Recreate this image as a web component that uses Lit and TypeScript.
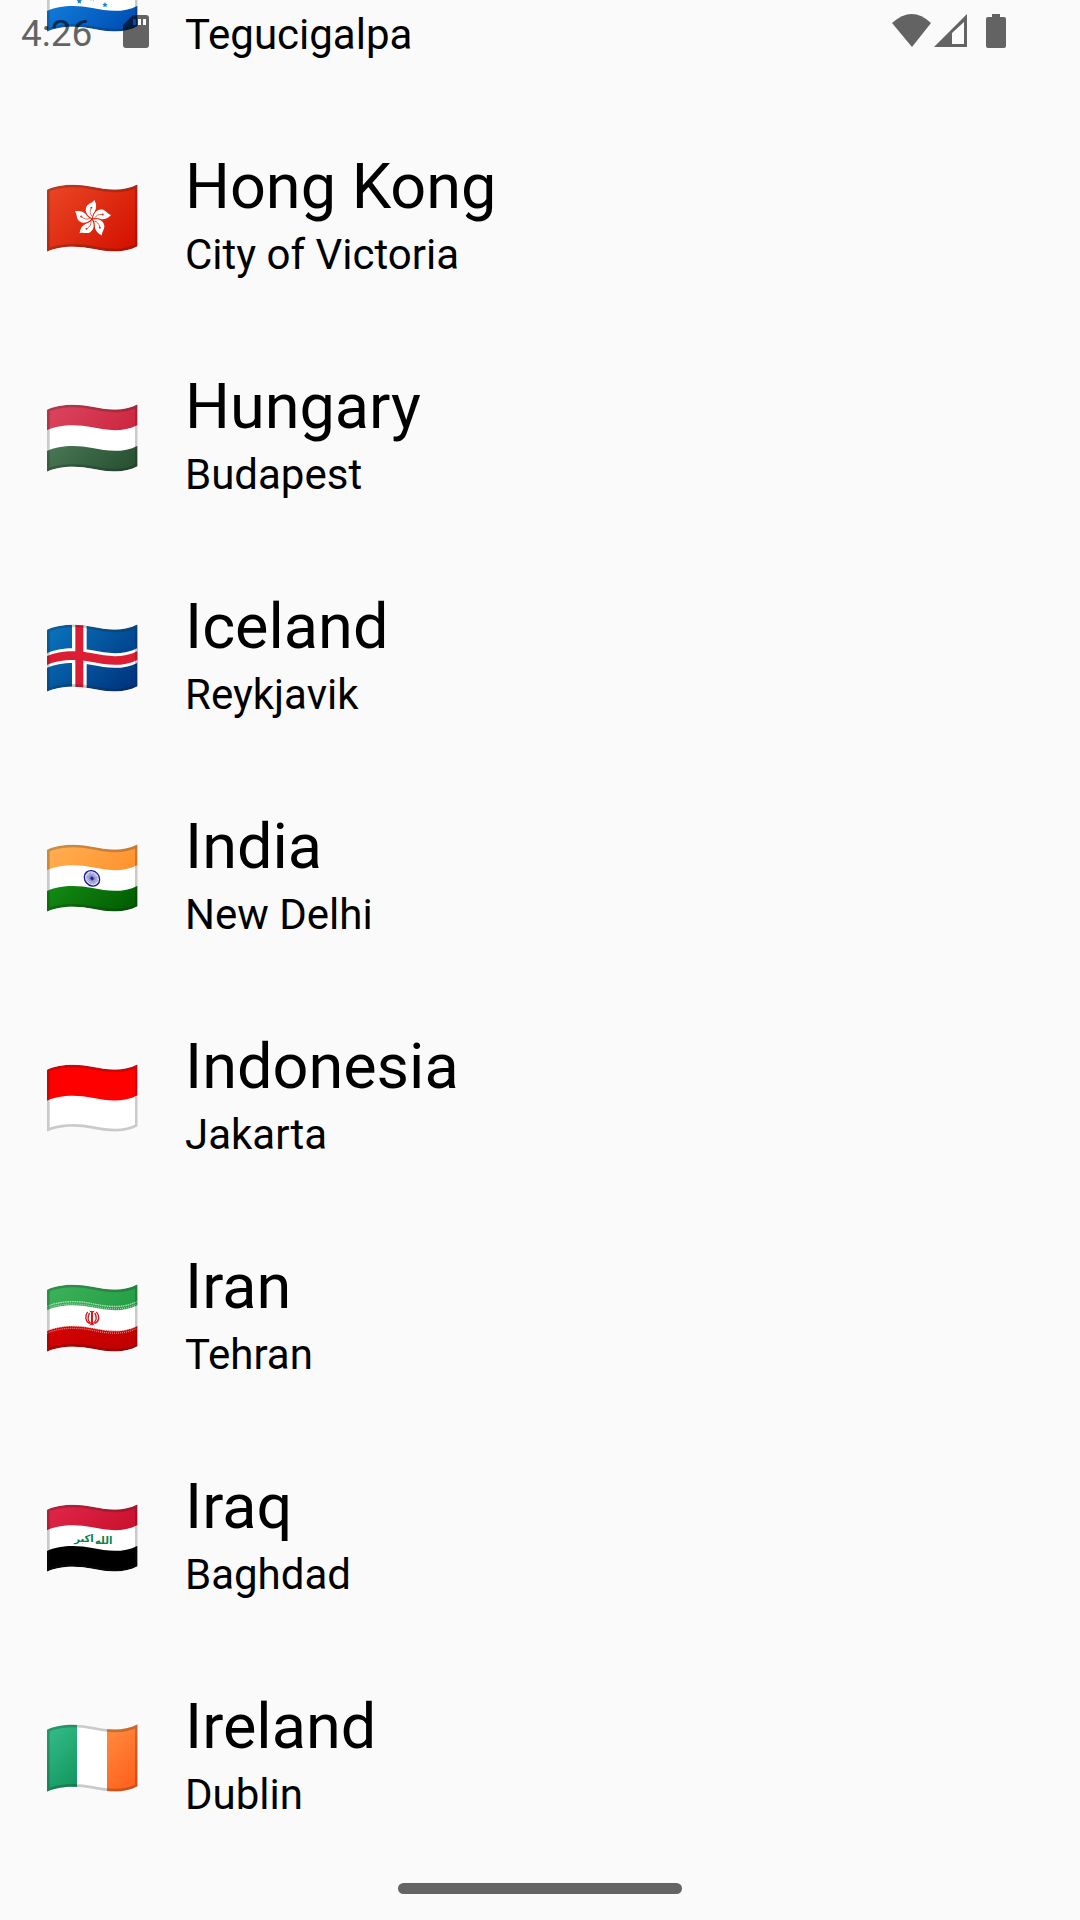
import { LitElement, html, svg, css } from "lit";
import { customElement, property } from "lit/decorators.js";

interface Country {
  code: string;
  name: string;
  capital: string;
}

const COUNTRIES: Country[] = [
  { code: "hn", name: "Honduras", capital: "Tegucigalpa" },
  { code: "hk", name: "Hong Kong", capital: "City of Victoria" },
  { code: "hu", name: "Hungary", capital: "Budapest" },
  { code: "is", name: "Iceland", capital: "Reykjavik" },
  { code: "in", name: "India", capital: "New Delhi" },
  { code: "id", name: "Indonesia", capital: "Jakarta" },
  { code: "ir", name: "Iran", capital: "Tehran" },
  { code: "iq", name: "Iraq", capital: "Baghdad" },
  { code: "ie", name: "Ireland", capital: "Dublin" },
];

/* Wavy horizontal edge of the cloth, shifted down by dy. */
const wave = (dy: number) =>
  `M51 ${59 + dy}C85 ${42 + dy} 140 ${40 + dy} 187 ${50 + dy}C234 ${60 + dy} 280 ${65 + dy} 323 ${43 + dy}`;

/* Closed stripe between two wavy edges. */
const band = (from: number, to: number) =>
  `${wave(from)}L323 ${43 + to}C280 ${65 + to} 234 ${60 + to} 187 ${50 + to}C140 ${40 + to} 85 ${42 + to} 51 ${59 + to}Z`;

const CLOTH = band(0, 186);

const shade = (id: string, light: string, dark: string) => svg`
  <linearGradient id=${id} gradientUnits="userSpaceOnUse" x1="90" y1="50" x2="280" y2="240">
    <stop offset="0" stop-color=${light}></stop>
    <stop offset="1" stop-color=${dark}></stop>
  </linearGradient>`;

const tricolour = (top: string, bottom: string) => svg`
  <path d=${CLOTH} fill="#fff"></path>
  <path d=${band(0, 62)} fill=${top}></path>
  <path d=${band(124, 186)} fill=${bottom}></path>`;

const star = (x: number, y: number) => svg`
  <path fill="#1482db" transform=${`translate(${x} ${y})`}
    d="M0-9L2-3L8-2L4 2L5 8L0 5L-5 8L-4 2L-8-2L-2-3Z"></path>`;

const petal = (turn: number) => svg`
  <g transform=${`translate(187 147) rotate(${turn})`}>
    <path fill="#fff" d="M-1-3C-14-8-24-22-18-36C-13-47 0-47 6-57C13-44 13-33 8-24C3-17 0-12-1-3Z"></path>
    <path fill="none" stroke="#dc2a12" stroke-width="2" d="M-1-8C-7-16-8-22-4-32"></path>
    <circle cx="-3" cy="-34" r="3" fill="#dc2a12"></circle>
  </g>`;

const fringe = (dy: number) => svg`
  <path d=${wave(dy - 4)} fill="none" stroke="#fff" stroke-opacity=".6" stroke-width="4" stroke-dasharray="5 2"></path>
  <path d=${wave(dy + 3)} fill="none" stroke="#fff" stroke-opacity=".5" stroke-width="4" stroke-dasharray="3 3"></path>`;

const FLAGS: Record<string, () => unknown> = {
  hn: () => svg`
    ${shade("a", "#1488e4", "#0050b4")}
    ${tricolour("url(#a)", "url(#a)")}
    ${star(148, 121)}${star(225, 132)}${star(187, 144)}${star(148, 153)}${star(225, 164)}`,
  hk: () => svg`
    ${shade("a", "#e84222", "#d41402")}
    <path d=${CLOTH} fill="url(#a)"></path>
    ${[0, 72, 144, 216, 288].map(petal)}`,
  hu: () => svg`
    ${shade("a", "#da425c", "#c81c36")}
    ${shade("b", "#528260", "#2a5233")}
    ${tricolour("url(#a)", "url(#b)")}`,
  is: () => svg`
    ${shade("a", "#0870b8", "#003680")}
    <path d=${CLOTH} fill="url(#a)"></path>
    <path d="M126 30H170V260H126Z" fill="#fff"></path>
    <path d=${band(71, 115)} fill="#fff"></path>
    <path d="M136 30H160V260H136Z" fill="#dc1e35"></path>
    <path d=${band(80, 106)} fill="#dc1e35"></path>`,
  in: () => svg`
    ${shade("a", "#ffac4e", "#ff8a24")}
    ${shade("b", "#18981a", "#026002")}
    ${tricolour("url(#a)", "url(#b)")}
    <g transform="translate(186 145) skewY(8)" stroke="#1a1a96" fill="none">
      <circle r="23" stroke-width="4"></circle>
      <circle r="11" stroke-width="22" stroke-opacity=".12"></circle>
      ${Array.from({ length: 24 }, (_, i) => svg`
        <path d="M0 0V-18" stroke-width="1" transform=${`rotate(${i * 15})`}></path>`)}
      <circle r="4" fill="#1a1a96" stroke="none"></circle>
    </g>`,
  id: () => svg`
    <path d=${CLOTH} fill="#fff"></path>
    <path d=${band(0, 93)} fill="#f00"></path>`,
  ir: () => svg`
    ${shade("a", "#3ab058", "#1c983e")}
    ${shade("b", "#d80404", "#c20000")}
    ${tricolour("url(#a)", "url(#b)")}
    ${fringe(55)}
    ${fringe(128)}
    <g fill="none" stroke="#d8161c" stroke-linecap="round">
      <path d="M186 127V163" stroke-width="6"></path>
      <path d="M180 165L186 161L192 165" stroke-width="3"></path>
      <path d="M180 124Q183 127 186 124Q189 127 192 124" stroke-width="3"></path>
      <path d="M172 127C164 138 166 154 178 160" stroke-width="4"></path>
      <path d="M200 127C210 138 208 154 195 160" stroke-width="4"></path>
      <path d="M178 130C173 140 174 152 181 159M195 130C200 140 199 152 191 159" stroke-width="4"></path>
    </g>`,
  iq: () => svg`
    ${shade("a", "#dc2446", "#c40a26")}
    ${tricolour("url(#a)", "#000")}
    <text class="script" x="162" y="156" text-anchor="middle">اكبر</text>
    <text class="script" x="221" y="163" text-anchor="middle">الله</text>`,
  ie: () => svg`
    ${shade("a", "#30b882", "#007e48")}
    ${shade("b", "#ffa452", "#ff6420")}
    <path d=${CLOTH} fill="#fff"></path>
    <path d="M40 30H141V260H40Z" fill="url(#a)"></path>
    <path d="M231 30H330V260H231Z" fill="url(#b)"></path>`,
};

@customElement("country-flag")
export class CountryFlag extends LitElement {
  @property() code = "";
  @property() label = "";

  static styles = css`
    :host {
      display: block;
      flex: none;
    }
    .flag {
      display: block;
      width: 92px;
      height: 70px;
    }
    .script {
      font-family: "DejaVu Sans", sans-serif;
      font-size: 30px;
      font-weight: 700;
      fill: #0a8048;
    }
  `;

  render() {
    return html`
      <svg class="flag" viewBox="48 39 276 210" role="img" aria-label=${this.label}>
        <clipPath id="cloth"><path d=${CLOTH}></path></clipPath>
        <g clip-path="url(#cloth)">
          ${FLAGS[this.code]?.()}
          <path d=${CLOTH} fill="none" stroke="#1a1a1a" stroke-opacity=".23" stroke-width="16"></path>
        </g>
      </svg>
    `;
  }
}

@customElement("country-row")
export class CountryRow extends LitElement {
  @property({ attribute: false }) country!: Country;

  static styles = css`
    :host {
      display: flex;
      align-items: center;
      gap: 47px;
      box-sizing: border-box;
      height: 220px;
      padding: 0 46px;
    }
    .text {
      display: flex;
      flex-direction: column;
      gap: 6px;
      min-width: 0;
      padding-bottom: 8px;
    }
    .name {
      margin: 0;
      font-size: 63px;
      line-height: 74px;
      font-weight: 400;
    }
    .capital {
      margin: 0;
      font-size: 42px;
      line-height: 49px;
    }
  `;

  render() {
    const { code, name, capital } = this.country;
    return html`
      <country-flag .code=${code} .label=${name}></country-flag>
      <div class="text">
        <h2 class="name">${name}</h2>
        <p class="capital">${capital}</p>
      </div>
    `;
  }
}

@customElement("status-bar")
export class StatusBar extends LitElement {
  static styles = css`
    :host {
      display: flex;
      align-items: center;
      justify-content: space-between;
      box-sizing: border-box;
      height: 62px;
      padding: 0 74px 0 21px;
      color: #000;
      opacity: 0.6;
    }
    .side {
      display: flex;
      align-items: center;
    }
    .time {
      font-size: 37px;
      line-height: 44px;
      padding-top: 5px;
    }
    .icon {
      display: block;
      height: 34px;
      fill: currentColor;
    }
    .card {
      width: 26px;
      margin-left: 31px;
    }
    .wifi {
      width: 40px;
    }
    .signal {
      width: 34px;
      margin-left: 2px;
    }
    .battery {
      width: 20px;
      margin-left: 18px;
    }
  `;

  render() {
    return html`
      <div class="side">
        <span class="time">4:26</span>
        <svg class="icon card" viewBox="0 0 26 34" aria-hidden="true">
          <path fill-rule="evenodd" d="M10 1H23Q26 1 26 4V31Q26 34 23 34H3Q0 34 0 31V11ZM10 5V11H13V5ZM15 5V11H18V5ZM20 5V11H23V5Z"></path>
        </svg>
      </div>
      <div class="side">
        <svg class="icon wifi" viewBox="0 0 40 34" aria-hidden="true">
          <path d="M0 9Q20-9 39 9L20 33Z"></path>
        </svg>
        <svg class="icon signal" viewBox="0 0 34 34" aria-hidden="true">
          <path fill-rule="evenodd" d="M33 0V33H0ZM30 8L18 19V30H30Z"></path>
        </svg>
        <svg class="icon battery" viewBox="0 0 20 34" aria-hidden="true">
          <path d="M6 0H14V3H18Q20 3 20 5V32Q20 34 18 34H2Q0 34 0 32V5Q0 3 2 3H6Z"></path>
        </svg>
      </div>
    `;
  }
}

@customElement("app-root")
export class AppRoot extends LitElement {
  static styles = css`
    :host {
      display: block;
      position: relative;
      min-height: 100vh;
      overflow: hidden;
      background: #fafafa;
      color: #000;
      font-family: Roboto, "Liberation Sans", sans-serif;
    }
    .status {
      position: absolute;
      inset: 0 0 auto;
    }
    .list {
      list-style: none;
      margin: -112px 0 0;
      padding: 0;
    }
    .handle {
      position: absolute;
      bottom: 26px;
      left: 50%;
      width: 284px;
      height: 11px;
      margin-left: -142px;
      border-radius: 6px;
      background: #000;
      opacity: 0.6;
    }
  `;

  render() {
    return html`
      <ul class="list">
        ${COUNTRIES.map((c) => html`<li><country-row .country=${c}></country-row></li>`)}
      </ul>
      <status-bar class="status"></status-bar>
      <div class="handle"></div>
    `;
  }
}
